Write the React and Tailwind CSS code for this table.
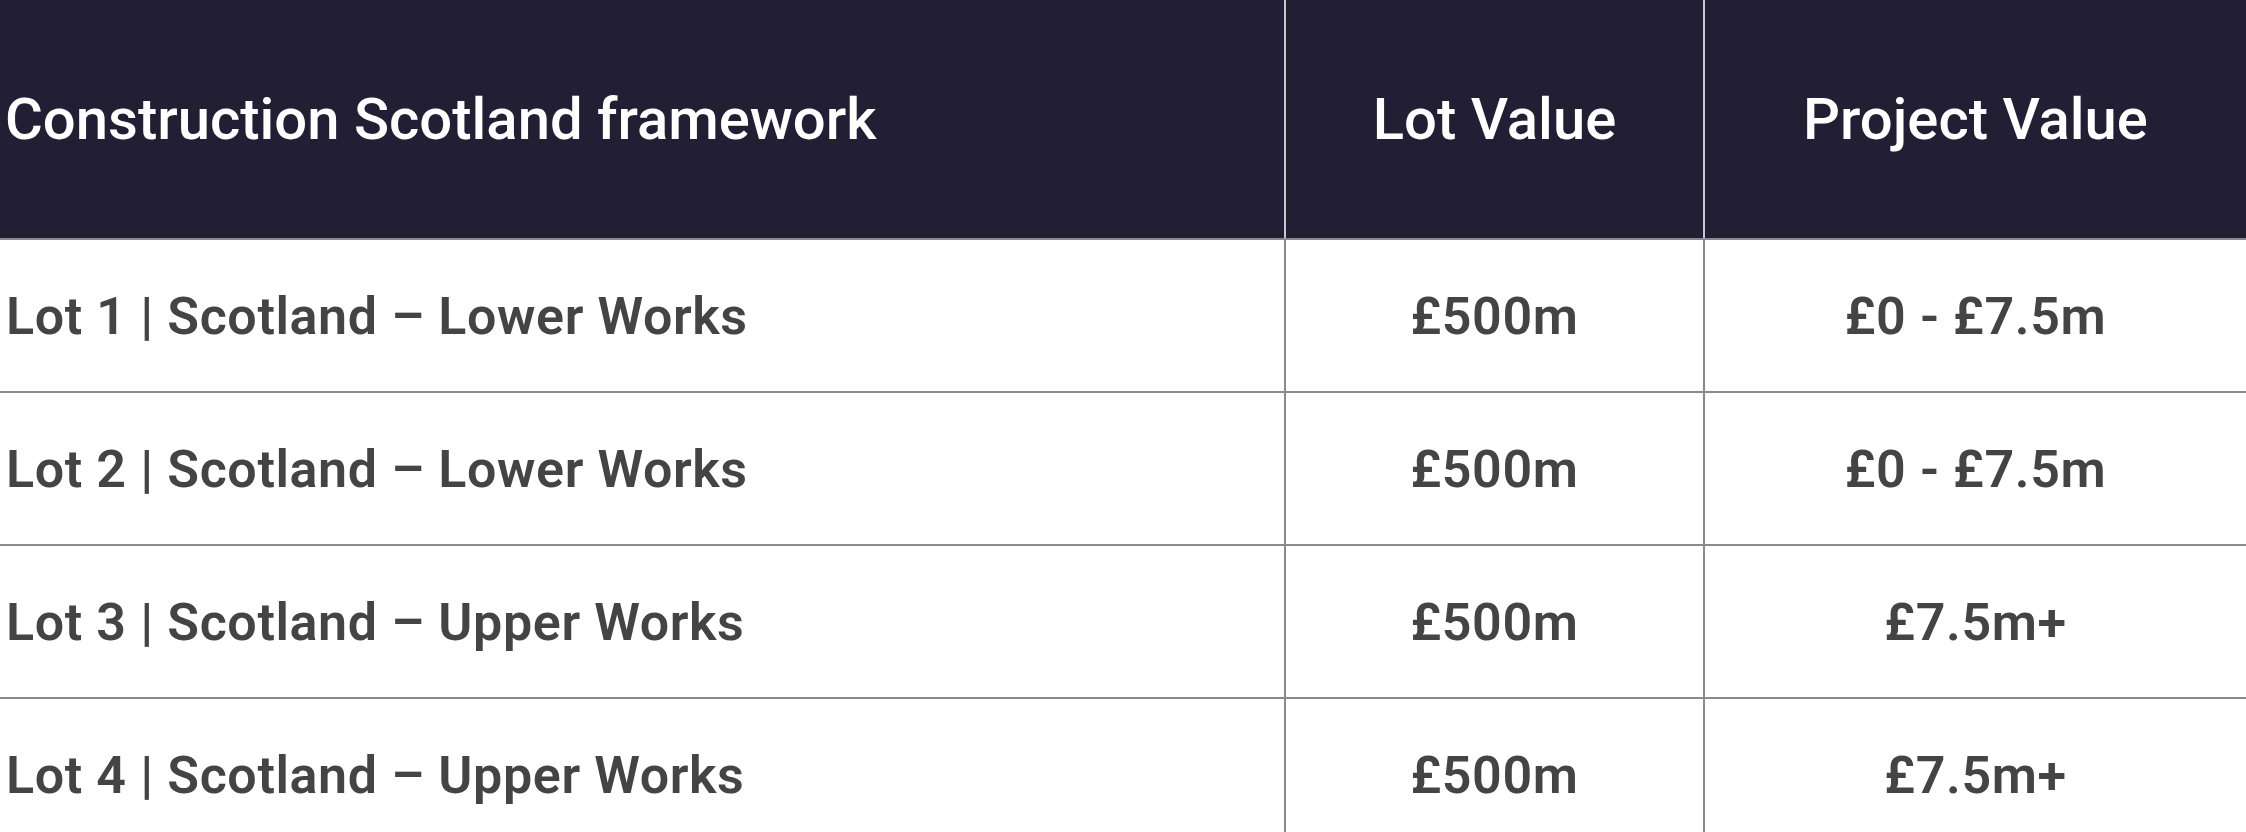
import React from "react";

const rows = [
  { lot: "Lot 1 | Scotland – Lower Works", value: "£500m", project: "£0 - £7.5m" },
  { lot: "Lot 2 | Scotland – Lower Works", value: "£500m", project: "£0 - £7.5m" },
  { lot: "Lot 3 | Scotland – Upper Works", value: "£500m", project: "£7.5m+" },
  { lot: "Lot 4 | Scotland – Upper Works", value: "£500m", project: "£7.5m+" },
];

function App() {
  return (
    <div className="w-[2246px] h-[832px] overflow-hidden bg-white font-['Roboto',sans-serif]">
      <div className="flex h-[240px] bg-[#221f35] text-white text-[58px] font-medium border-b-2 border-[#8a8a8a]">
        <div className="w-[1284px] flex items-center pl-[5px]">Construction Scotland framework</div>
        <div className="w-[419px] flex items-center justify-center border-l-2 border-[#c8c8cc]">Lot Value</div>
        <div className="flex-1 flex items-center justify-center border-l-2 border-[#c8c8cc]">Project Value</div>
      </div>
      {rows.map((row, index) => (
        <div
          key={index}
          className="flex h-[153px] text-[#444444] text-[52px] font-semibold tracking-[0.6px] border-b-2 border-[#8a8a8a]"
        >
          <div className="w-[1284px] flex items-center pl-[6px] pt-[2px]">{row.lot}</div>
          <div className="w-[419px] flex items-center justify-center pt-[2px] border-l-2 border-[#8a8a8a]">{row.value}</div>
          <div className="flex-1 flex items-center justify-center pt-[2px] border-l-2 border-[#8a8a8a]">{row.project}</div>
        </div>
      ))}
    </div>
  );
}

export default App;
